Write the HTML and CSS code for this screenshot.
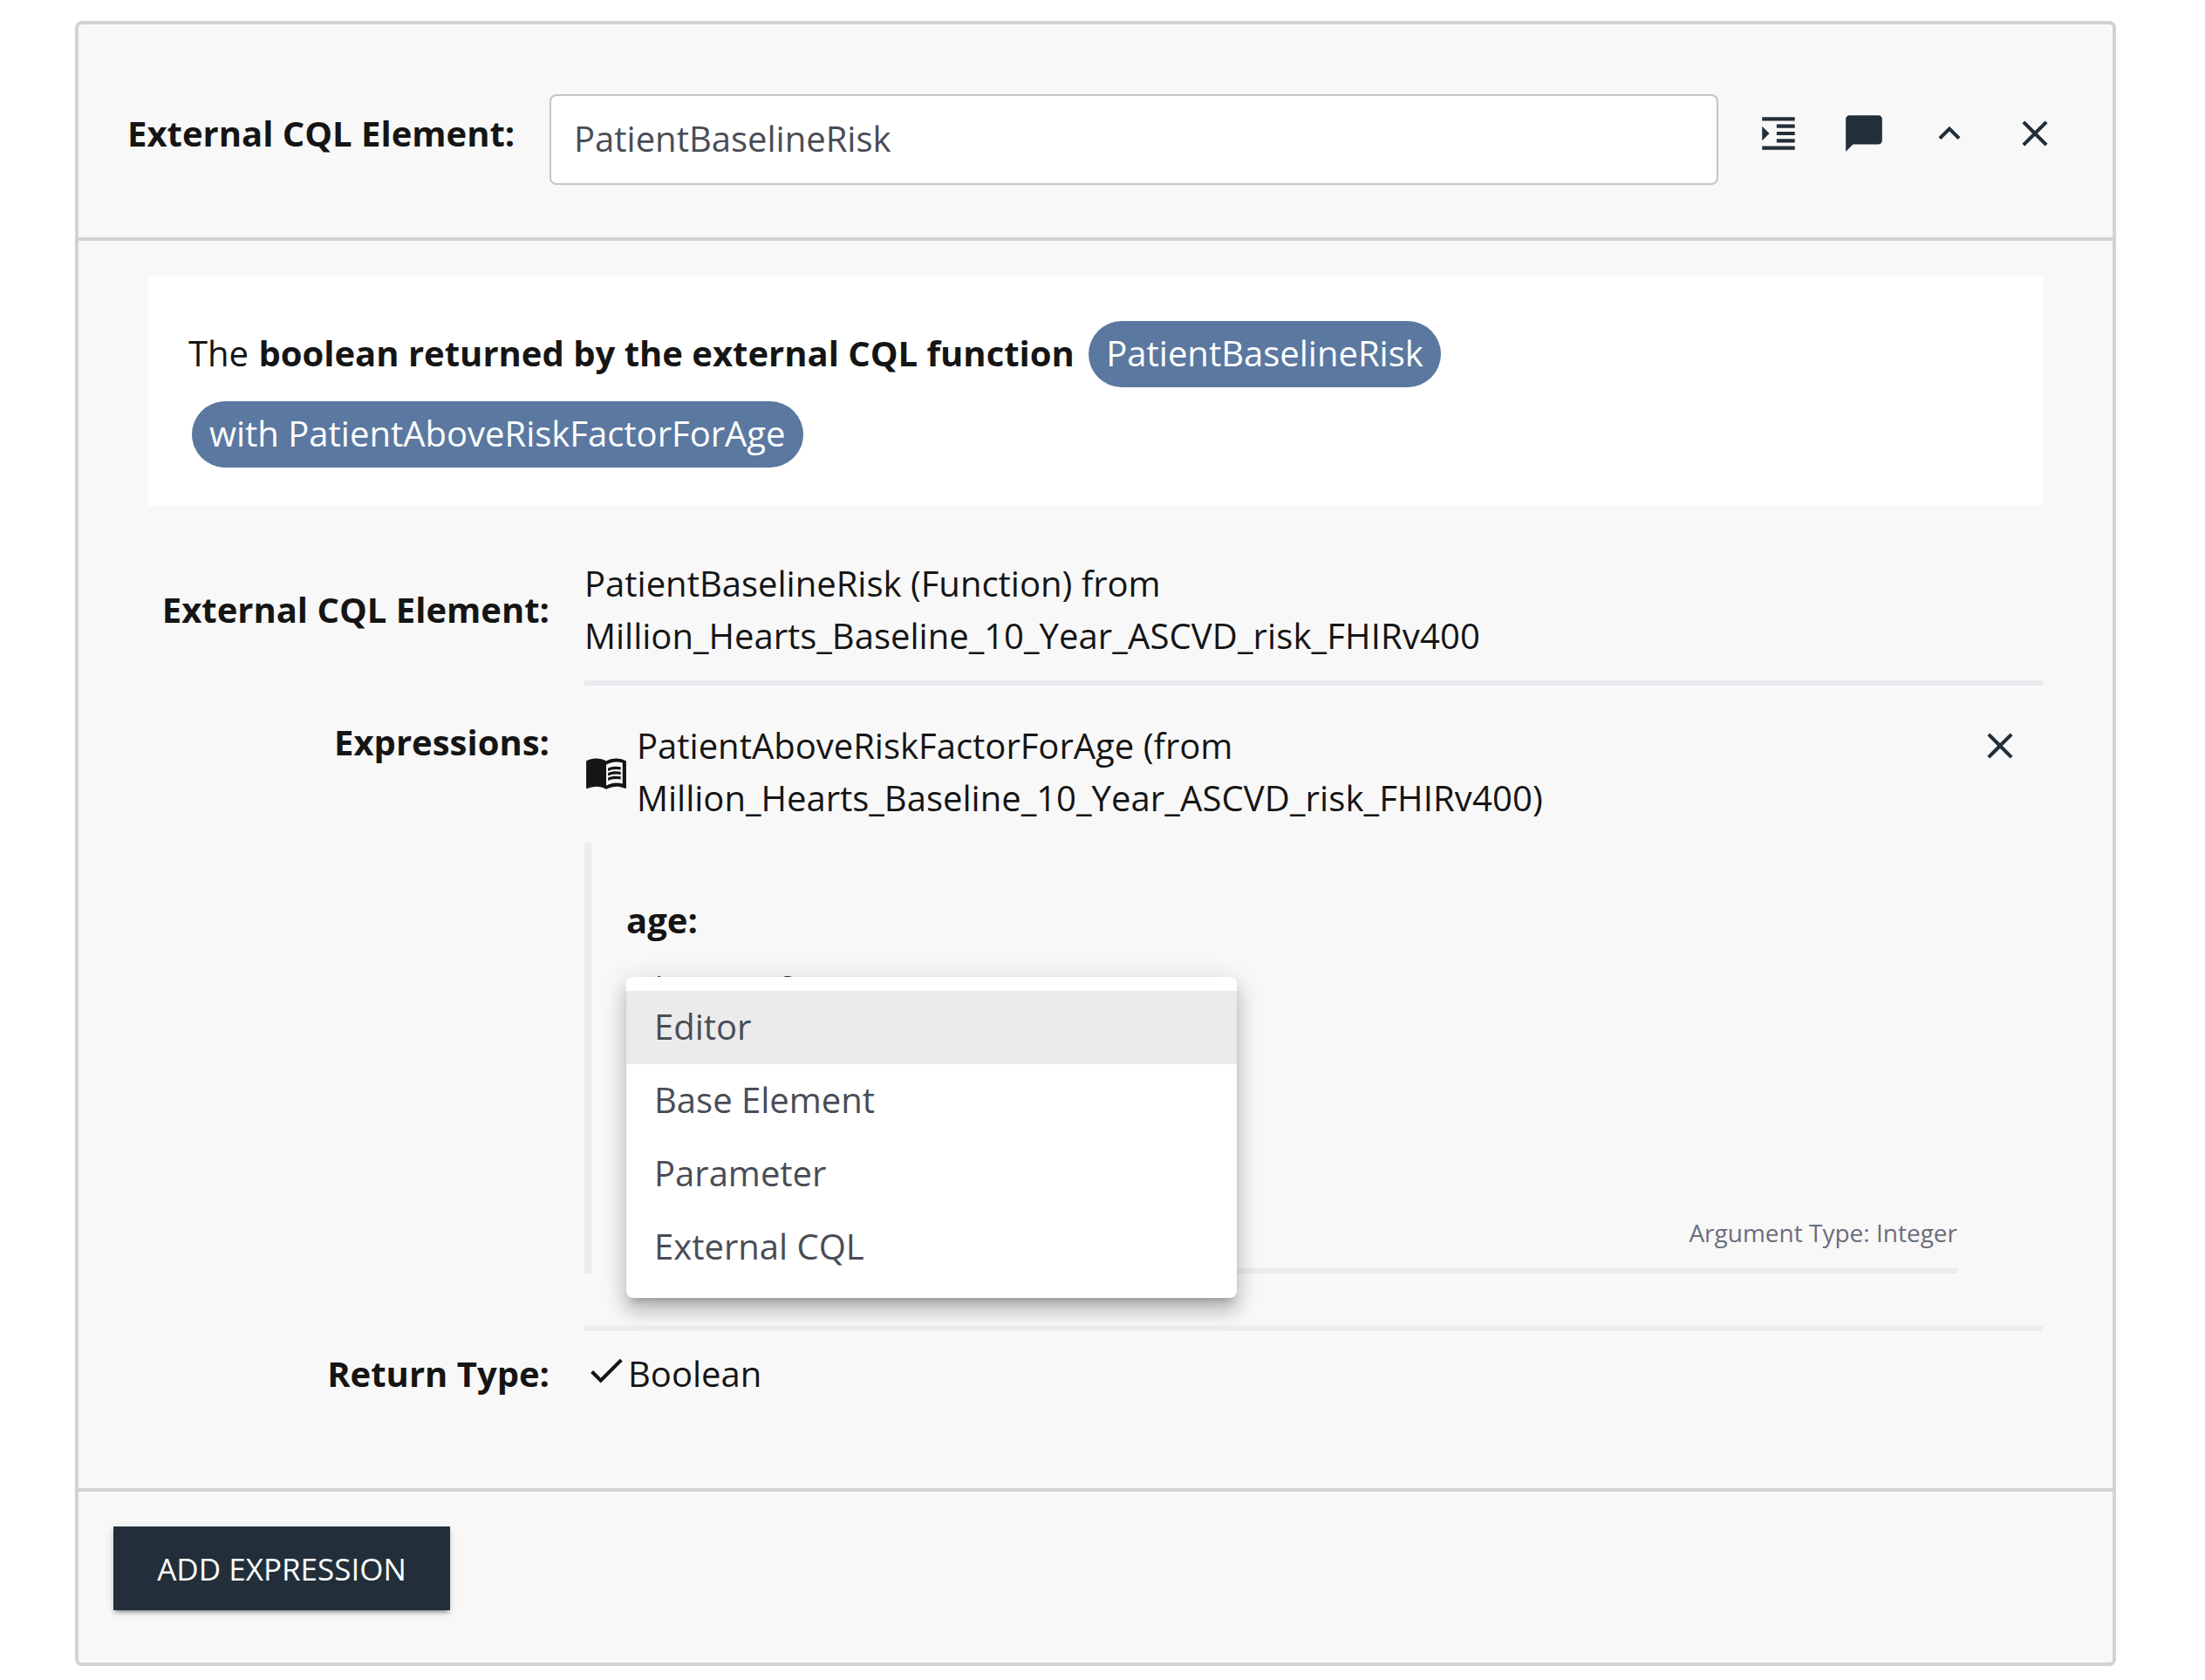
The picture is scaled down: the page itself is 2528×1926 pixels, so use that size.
FILE: index.html
```html
<!DOCTYPE html>
<html lang="en">
<head>
<meta charset="utf-8">
<title>External CQL Element</title>
<link rel="stylesheet" href="styles.css">
</head>
<body>
<section class="card">
  <header class="card-header">
    <div class="header-label">External CQL Element:</div>
    <div class="name-field">PatientBaselineRisk</div>
    <div class="actions">
      <svg class="icon" viewBox="0 0 24 24"><path d="M3 21h18v-2H3v2zM3 8v8l4-4-4-4zm8 9h10v-2H11v2zM3 3v2h18V3H3zm8 6h10V7H11v2zm0 4h10v-2H11v2z"/></svg>
      <svg class="icon" viewBox="0 0 24 24"><path d="M20 2H4c-1.1 0-2 .9-2 2v18l4-4h14c1.100 0 2-.9 2-2V4c0-1.100-.9-2-2-2z"/></svg>
      <svg class="icon" viewBox="0 0 24 24"><path d="M12 8l-6 6 1.410 1.410L12 10.830l4.590 4.580L18 14z"/></svg>
      <svg class="icon" viewBox="0 0 24 24"><path d="M19 6.410L17.590 5 12 10.590 6.410 5 5 6.410 10.590 12 5 17.590 6.410 19 12 13.410 17.590 19 19 17.590 13.410 12z"/></svg>
    </div>
  </header>
  <div class="card-body">
    <div class="phrase">The <b>boolean returned by the external CQL function</b> <span class="pill">PatientBaselineRisk</span> <span class="pill">with PatientAboveRiskFactorForAge</span></div>
    <div class="row row-element">
      <div class="label">External CQL Element:</div>
      <div class="value">PatientBaselineRisk (Function) from<br>Million_Hearts_Baseline_10_<span class="loose">Year_ASCVD_risk_FHIRv400</span></div>
    </div>
    <div class="row row-expressions">
      <div class="label">Expressions:</div>
      <div class="value">
        <div class="expression">
          <svg class="book" viewBox="0 0 24 24"><path d="M17.500 4.500c-1.950 0-4.050.4-5.500 1.500-1.450-1.100-3.550-1.500-5.500-1.500S2.450 4.900 1 6v14.650c0 .65.730.45.750.45C3.100 20.450 5.050 20 6.500 20c1.950 0 4.050.4 5.500 1.500 1.350-.85 3.800-1.500 5.500-1.500 1.650 0 3.350.3 4.750 1.050.41.210.75-.19.750-.45V6c-1.490-1.120-3.630-1.500-5.500-1.500zm3.500 14c-1.100-.35-2.300-.5-3.500-.5-1.700 0-4.150.65-5.500 1.500V8c1.350-.85 3.800-1.500 5.500-1.500 1.200 0 2.400.15 3.500.5v11.500z"/><path d="M17.500 10.500c.88 0 1.730.09 2.500.26V9.240c-.79-.15-1.640-.24-2.500-.24-1.700 0-3.240.29-4.500.83v1.660c1.130-.64 2.700-.99 4.500-.99zM13 12.490v1.660c1.130-.64 2.700-.99 4.500-.99.88 0 1.730.09 2.500.26V11.900c-.79-.15-1.640-.24-2.500-.24-1.700 0-3.240.3-4.500.83zM17.500 14.330c-1.700 0-3.240.29-4.500.83v1.660c1.130-.64 2.700-.99 4.500-.99.88 0 1.730.09 2.500.26v-1.520c-.79-.16-1.640-.24-2.500-.24z"/></svg>
          <div class="expression-text">PatientAboveRiskFactorForAge (from<br>Million_Hearts_Baseline_10_<span class="loose">Year_ASCVD_risk_FHIRv400)</span></div>
          <svg class="icon remove" viewBox="0 0 24 24"><path d="M19 6.410L17.590 5 12 10.590 6.410 5 5 6.410 10.590 12 5 17.590 6.410 19 12 13.410 17.590 19 19 17.590 13.410 12z"/></svg>
        </div>
        <div class="arguments">
          <div class="arg-name">age:</div>
          <div class="select">
            <div class="select-label">Argument Source</div>
            <div class="menu">
              <div class="option selected">Editor</div>
              <div class="option">Base Element</div>
              <div class="option">Parameter</div>
              <div class="option">External CQL</div>
            </div>
          </div>
          <div class="arg-type">Argument Type: Integer</div>
        </div>
      </div>
    </div>
    <div class="row row-return">
      <div class="label">Return Type:</div>
      <div class="value return-value"><svg class="check" viewBox="0 0 24 24"><path d="M9 16.170L4.830 12l-1.420 1.410L9 19 21 7l-1.410-1.410z"/></svg>Boolean</div>
    </div>
  </div>
  <footer class="card-footer"><div class="add">ADD EXPRESSION</div></footer>
</section>
</body>
</html>
```
FILE: styles.css
```css
* { box-sizing: border-box; }
body {
  margin: 0;
  padding: 24px 102px 16px 86px;
  background: #fff;
  color: #151515;
  font: 40px/60px "Open Sans", sans-serif;
}
.card {
  display: flex;
  flex-direction: column;
  height: 1886px;
  border: 4px solid #d2d2d2;
  border-radius: 8px;
  background: #f8f8f8;
}
.card-header {
  display: flex;
  height: 248px;
  padding: 80px 0 0 56px;
  border-bottom: 4px solid #d2d2d2;
}
.header-label { width: 484px; padding-top: 15px; font-weight: 700; }
.name-field {
  width: 1340px;
  height: 104px;
  padding: 19px 26px;
  border: 2px solid #c4c4c4;
  border-radius: 8px;
  background: #fff;
  color: #494c56;
}
.actions { display: flex; gap: 48px; padding: 20px 0 0 44px; }
.icon { width: 50px; height: 50px; fill: #222f3a; }
.card-body { height: 1430px; padding: 40px 80px 0; }
.phrase {
  height: 264px;
  padding: 43px 46px;
  background: #fff;
  line-height: 92px;
}
.phrase b { margin: 0 2px 0 1px; }
.pill {
  display: inline-block;
  height: 76px;
  margin: 0 4px;
  padding: 0 20px;
  border-radius: 38px;
  background: #5a78a0;
  color: #fff;
  line-height: 74px;
}
.loose { letter-spacing: .13px; }
.row { display: flex; gap: 40px; }
.label { width: 460px; text-align: right; font-weight: 700; }
.value { flex: 1; }
.row-element { height: 206px; padding-top: 59px; }
.row-element .label { padding-top: 30px; }
.row-element .value { height: 147px; border-bottom: 6px solid #e8eaed; }
.row-expressions { height: 740px; }
.row-expressions > .label { padding-top: 35px; }
.row-expressions > .value { padding-top: 39px; border-bottom: 6px solid #ebebf0; }
.expression { display: flex; align-items: center; height: 120px; }
.book { width: 50px; height: 50px; margin-right: 10px; fill: #151515; }
.expression-text { flex: 1; }
.remove { margin-right: 24px; margin-bottom: 60px; }
.arguments {
  display: flex;
  flex-direction: column;
  height: 494px;
  margin: 21px 98px 0 0;
  padding-left: 40px;
  border-left: 8px solid #ebebf0;
}
.arg-name { padding: 59px 0 1px; font-weight: 700; }
.select { position: relative; height: 300px; }
.select-label { padding: 20px 0 0 28px; color: #222f3a; font-size: 30px; line-height: 45px; }
.menu {
  position: absolute;
  left: 0;
  top: 34px;
  width: 700px;
  height: 368px;
  padding: 16px 0;
  border-radius: 8px;
  background: #fff;
  box-shadow: 0 10px 10px -6px rgba(0,0,0,.2), 0 16px 20px 2px rgba(0,0,0,.14), 0 6px 28px 4px rgba(0,0,0,.12);
  color: #494c56;
}
.option { height: 84px; padding: 11px 32px; }
.selected { background: #ebebeb; }
.arg-type {
  margin-top: auto;
  height: 72px;
  border-bottom: 6px solid #ebebf0;
  color: #6b6e7b;
  font-size: 28px;
  line-height: 50px;
  text-align: right;
}
.row-return { padding-top: 19px; }
.return-value { display: flex; align-items: center; height: 60px; }
.check { width: 50px; height: 50px; margin-bottom: 8px; fill: #151515; }
.card-footer { padding: 40px; border-top: 4px solid #d2d2d2; }
.add {
  width: 386px;
  height: 96px;
  background: #222f3a;
  box-shadow: 0 6px 2px -4px rgba(0,0,0,.2), 0 4px 4px 0 rgba(0,0,0,.14), 0 2px 10px 0 rgba(0,0,0,.12);
  color: #fff;
  font-size: 35px;
  line-height: 98px;
  text-align: center;
}
```
